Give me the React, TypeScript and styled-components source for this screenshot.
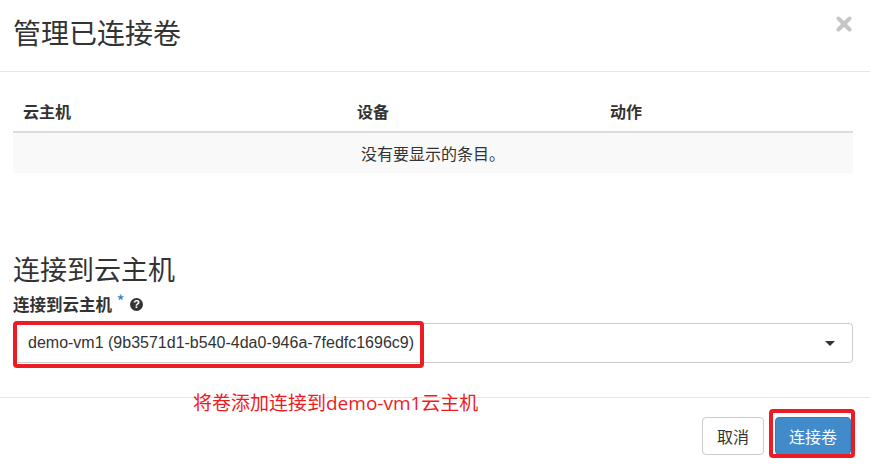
import React from "react";
import styled, { createGlobalStyle } from "styled-components";

const GlobalStyle = createGlobalStyle`
  html, body {
    margin: 0;
    padding: 0;
    background: #ffffff;
  }
  body {
    font-family: "Liberation Sans", "Noto Sans CJK SC", sans-serif;
    color: #333333;
  }
  * { box-sizing: border-box; }
`;

const Modal = styled.div`
  position: relative;
  width: 870px;
  height: 473px;
  overflow: hidden;
  background: #ffffff;
  display: flex;
  flex-direction: column;
`;

const Header = styled.div`
  height: 72px;
  display: flex;
  justify-content: space-between;
  align-items: flex-start;
  padding: 0 18px 0 13px;
  border-bottom: 1px solid #e5e5e5;
`;

const Title = styled.h4`
  margin: 12px 0 0 0;
  font-family: "Noto Sans CJK SC", sans-serif;
  font-weight: 400;
  font-size: 28px;
  line-height: 40px;
  color: #333333;
`;

const Close = styled.button`
  margin-top: 16px;
  padding: 0;
  border: 0;
  background: transparent;
  width: 16px;
  height: 16px;
  display: flex;
  cursor: pointer;
`;

const Body = styled.div`
  padding: 22px 17px 0 13px;
  height: 325px;
`;

const Table = styled.table`
  width: 840px;
  border-collapse: collapse;
  table-layout: fixed;
  font-family: "Noto Sans CJK SC", sans-serif;
  font-size: 16px;
`;

const Th = styled.th<{ $w: number }>`
  width: ${(p) => p.$w}px;
  height: 38px;
  padding: 0 10px 3px 10px;
  text-align: left;
  vertical-align: middle;
  font-weight: 700;
  color: #333333;
  border-bottom: 2px solid #dddddd;
`;

const EmptyCell = styled.td`
  height: 41px;
  background: #f9f9f9;
  text-align: center;
  vertical-align: middle;
  color: #333333;
  padding: 0;
`;

const SectionTitle = styled.h3`
  margin: 81px 0 0 0;
  font-family: "Noto Sans CJK SC", sans-serif;
  font-weight: 400;
  font-size: 27px;
  line-height: 30px;
  color: #333333;
`;

const Label = styled.label`
  display: flex;
  align-items: center;
  margin-top: 10px;
  height: 20px;
  font-family: "Noto Sans CJK SC", sans-serif;
  font-weight: 700;
  font-size: 16.5px;
  color: #333333;
`;

const Required = styled.span`
  color: #3a87c8;
  font-size: 14px;
  font-weight: 700;
  margin-left: 5px;
  align-self: flex-start;
  margin-top: -4px;
`;

const Help = styled.span`
  display: inline-flex;
  align-items: center;
  justify-content: center;
  width: 13px;
  height: 13px;
  border-radius: 50%;
  background: #333333;
  color: #ffffff;
  font-family: "Liberation Sans", sans-serif;
  font-size: 11px;
  font-weight: 700;
  margin-left: 6px;
  line-height: 1;
`;

const SelectWrap = styled.div`
  position: relative;
  margin-top: 9px;
`;

const Select = styled.div`
  height: 40px;
  border: 1px solid #cccccc;
  border-radius: 4px;
  display: flex;
  align-items: center;
  justify-content: space-between;
  padding: 0 17px 0 14px;
  font-family: "Liberation Sans", sans-serif;
  font-size: 16px;
  color: #333333;
  background: #ffffff;
`;

const Caret = styled.span`
  width: 0;
  height: 0;
  border-left: 5px solid transparent;
  border-right: 5px solid transparent;
  border-top: 5px solid #333333;
`;

const RedBox = styled.div<{ $l: number; $t: number; $w: number; $h: number }>`
  position: absolute;
  left: ${(p) => p.$l}px;
  top: ${(p) => p.$t}px;
  width: ${(p) => p.$w}px;
  height: ${(p) => p.$h}px;
  border: 4.5px solid #ec1c24;
  border-radius: 4px;
  pointer-events: none;
`;

const Footer = styled.div`
  border-top: 1px solid #e5e5e5;
  flex: 1;
  display: flex;
  justify-content: flex-end;
  align-items: flex-start;
  gap: 11px;
  padding: 19px 19px 0 0;
`;

const Button = styled.button<{ $primary?: boolean }>`
  height: 38px;
  padding: 0 ${(p) => (p.$primary ? 13 : 14)}px;
  border-radius: 4px;
  border: 1px solid ${(p) => (p.$primary ? "#357ebd" : "#cccccc")};
  background: ${(p) => (p.$primary ? "#428bca" : "#ffffff")};
  color: ${(p) => (p.$primary ? "#ffffff" : "#333333")};
  font-family: "Noto Sans CJK SC", sans-serif;
  font-size: 16px;
  cursor: pointer;
`;

const ButtonHolder = styled.span`
  position: relative;
  display: inline-flex;
`;

const Annotation = styled.div`
  position: absolute;
  left: 193px;
  top: 390px;
  font-family: "Open Sans", "Noto Sans CJK SC", sans-serif;
  font-size: 19px;
  line-height: 26px;
  color: #ec1c24;
  white-space: nowrap;
`;

export default function App() {
  return (
    <>
      <GlobalStyle />
      <Modal>
        <Header>
          <Title>管理已连接卷</Title>
          <Close aria-label="关闭">
            <svg width="16" height="16" viewBox="0 0 16 16">
              <path d="M2.5 2.5 L13.5 13.5 M13.5 2.5 L2.5 13.5" stroke="#c6c6c6" strokeWidth="4" strokeLinecap="round" />
            </svg>
          </Close>
        </Header>
        <Body>
          <Table>
            <thead>
              <tr>
                <Th $w={334}>云主机</Th>
                <Th $w={253}>设备</Th>
                <Th $w={253}>动作</Th>
              </tr>
            </thead>
            <tbody>
              <tr>
                <EmptyCell colSpan={3}>没有要显示的条目。</EmptyCell>
              </tr>
            </tbody>
          </Table>
          <SectionTitle>连接到云主机</SectionTitle>
          <Label>
            连接到云主机
            <Required>*</Required>
            <Help>?</Help>
          </Label>
          <SelectWrap>
            <Select>
              <span>demo-vm1 (9b3571d1-b540-4da0-946a-7fedfc1696c9)</span>
              <Caret />
            </Select>
            <RedBox $l={0} $t={-2} $w={411} $h={47} />
          </SelectWrap>
        </Body>
        <Footer>
          <Button>取消</Button>
          <ButtonHolder>
            <Button $primary>连接卷</Button>
            <RedBox $l={-6} $t={-8} $w={86} $h={49} />
          </ButtonHolder>
        </Footer>
        <Annotation>将卷添加连接到demo-vm1云主机</Annotation>
      </Modal>
    </>
  );
}
